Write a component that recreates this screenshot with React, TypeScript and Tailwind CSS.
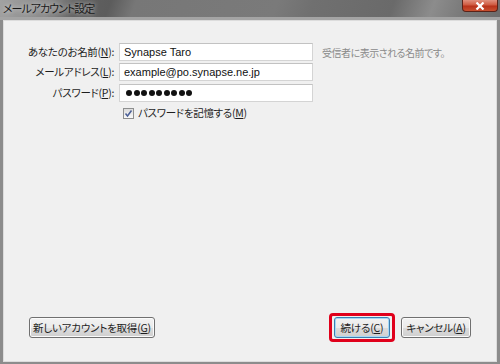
import React from 'react';

const jp = "font-['Noto_Sans_CJK_JP',sans-serif] [font-feature-settings:'palt']";

function Key({ k }: { k: string }) {
  return (
    <>
      (<span className="underline underline-offset-1">{k}</span>)
    </>
  );
}

function Field({ label, k, children, hint }: { label: string; k: string; children: React.ReactNode; hint?: string }) {
  return (
    <div className="flex items-center h-[18px]">
      <div className={`w-[110px] text-right text-[10.5px] tracking-[-0.3px] text-[#1e1e1e] whitespace-nowrap ${jp}`}>
        {label}
        <Key k={k} />:
      </div>
      <div className="ml-[5px] w-[194px] h-[18px] bg-white border border-[#d4d4d4] border-t-[#c2c2c2] flex items-center px-[4px] text-[11px] text-[#111] font-['Liberation_Sans',sans-serif]">
        {children}
      </div>
      {hint && <div className={`ml-[9px] text-[10px] tracking-[-0.5px] text-[#8a8a8a] whitespace-nowrap ${jp}`}>{hint}</div>}
    </div>
  );
}

function WinButton({ children, className = '', focused = false }: { children: React.ReactNode; className?: string; focused?: boolean }) {
  return (
    <button
      className={`h-[21px] rounded-[3px] border whitespace-nowrap ${focused ? 'border-[#3c7fb1] shadow-[inset_0_0_0_1px_#a6d8f5]' : 'border-[#707070] shadow-[inset_0_0_0_1px_#fbfbfb]'} bg-[linear-gradient(#f2f2f2_0%,#ebebeb_50%,#dddddd_50%,#cfcfcf_100%)] text-[10.5px] tracking-[-0.2px] text-[#1e1e1e] flex items-center justify-center ${jp} ${className}`}
    >
      {children}
    </button>
  );
}

export default function App() {
  return (
    <div className="w-[500px] h-[364px] bg-[#8c8c8c] flex flex-col overflow-hidden">
      <div className="relative h-[17px] bg-[linear-gradient(110deg,#a2a2a2_0%,#8a8a8a_10%,#606060_16%,#5c5c5c_22%,#777777_27%,#7a7a7a_55%,#707070_62%,#6a6a6a_78%,#8c8c8c_86%,#7a7a7a_92%,#6c6c6c_100%)]">
        <div className={`absolute left-[3px] top-[1px] text-[11px] tracking-[-1px] leading-[15px] text-[#1a1a1a] whitespace-nowrap [text-shadow:0_0_5px_rgba(255,255,255,0.8)] ${jp}`}>
          メールアカウント設定
        </div>
        <div className="absolute right-[2px] top-0 w-[36px] h-[12px] rounded-b-[4px] border border-t-0 border-[#5a2218] bg-[linear-gradient(#e0907e_0%,#cf5a40_45%,#b8321a_55%,#c85030_100%)] flex items-center justify-center">
          <svg width="10" height="8" viewBox="0 0 10 8">
            <path d="M1.5 0.5 L8.5 7.5 M8.5 0.5 L1.5 7.5" stroke="#fff" strokeWidth="2.2" />
          </svg>
        </div>
      </div>
      <div className="h-[3px] bg-[#a4a4a4]" />
      <div className="flex-1 ml-[3px] mr-[3px] mb-[2px] bg-[#f0f0f0] border border-[#dcdcdc] flex flex-col">
        <div className="pt-[22px] flex flex-col">
          <Field label="あなたのお名前" k="N" hint="受信者に表示される名前です。">
            Synapse Taro
          </Field>
          <div className="mt-[2px]">
            <Field label="メールアドレス" k="L">
              example@po.synapse.ne.jp
            </Field>
          </div>
          <div className="mt-[3px]">
            <Field label="パスワード" k="P">
              <div className="flex items-center gap-[1.5px] pl-[2px]">
                {Array.from({ length: 9 }).map((_, i) => (
                  <div key={i} className="w-[6px] h-[6px] rounded-full bg-[#111]" />
                ))}
              </div>
            </Field>
          </div>
          <div className="mt-[5px] ml-[119px] flex items-center h-[12px]">
            <div className="w-[11px] h-[11px] border border-[#8e8f8f] bg-[linear-gradient(#dcdcdc,#fafafa)] flex items-center justify-center">
              <svg width="9" height="9" viewBox="0 0 9 9">
                <path d="M1.5 4.5 L3.5 7 L7.5 1.5" stroke="#4a5f97" strokeWidth="1.5" fill="none" />
              </svg>
            </div>
            <span className={`ml-[4px] text-[10.5px] tracking-[-0.3px] text-[#1e1e1e] whitespace-nowrap ${jp}`}>
              パスワードを記憶する<Key k="M" />
            </span>
          </div>
        </div>
        <div className="flex-1" />
        <div className="flex items-center px-[25px] pb-[23px]">
          <WinButton className="w-[126px]">
            新しいアカウントを取得<Key k="G" />
          </WinButton>
          <div className="flex-1" />
          <div className="relative">
            <WinButton className="w-[56px]" focused>
              続ける<Key k="C" />
            </WinButton>
            <div className="absolute -inset-[4px] -left-[5px] -right-[5px] border-[3px] border-[#e0001b] rounded-[4px] pointer-events-none" />
          </div>
          <WinButton className="w-[70px] ml-[11px]">
            キャンセル<Key k="A" />
          </WinButton>
        </div>
      </div>
    </div>
  );
}
